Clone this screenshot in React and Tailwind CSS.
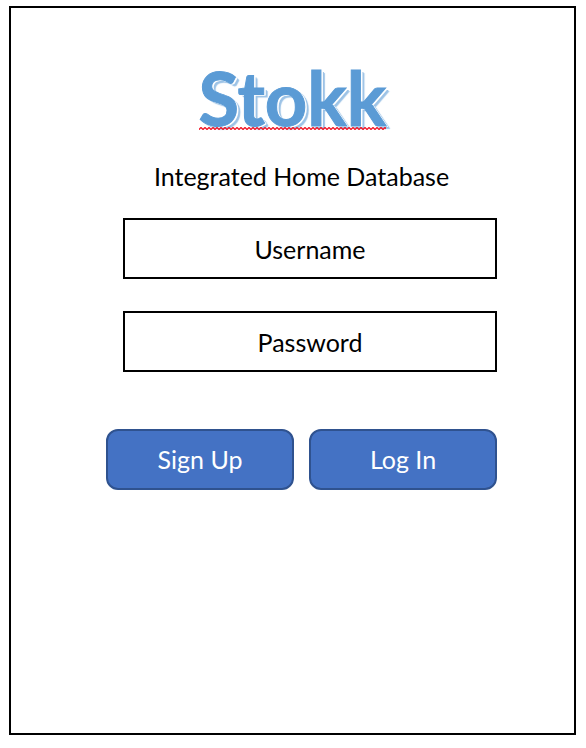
const fieldClass =
  "h-[61px] w-full border-2 border-black bg-white px-4 text-center text-[25px] text-black placeholder:text-black placeholder:opacity-100 focus:outline-none";

const buttonClass =
  "h-[61px] flex-1 rounded-xl border-2 border-[#2f528f] bg-[#4472c4] text-center text-[25px] text-white";

function Field({ id, label, type }) {
  return (
    <input id={id} name={id} type={type} aria-label={label} placeholder={label} className={fieldClass} />
  );
}

function Squiggle() {
  return (
    <svg
      className="absolute inset-x-0 bottom-0 h-[3px] w-full"
      aria-hidden="true"
    >
      <defs>
        <pattern id="squiggle" width="4" height="3" patternUnits="userSpaceOnUse">
          <path d="M-1 3.5 L0 2.5 L2 0.5 L4 2.5 L5 3.5" fill="none" stroke="#f01828" strokeWidth="1.3" />
        </pattern>
      </defs>
      <rect width="100%" height="3" fill="url(#squiggle)" />
    </svg>
  );
}

export default function App() {
  return (
    <div className="flex min-h-screen bg-white pt-1.5 pr-2.5 pb-[13px] pl-[9px] font-['Lato',sans-serif] text-black">
      <main className="flex-1 border-2 border-black">
        <header className="flex justify-center pt-[58px]">
          <h1 className="relative h-16 text-[74px] leading-16 font-bold text-[#5b9bd5] [-webkit-text-stroke:1px_#5b9bd5] [text-shadow:1px_1px_0_#fff,2px_1px_0_#fff,3px_2px_0_#9dc3e6,4px_3px_1px_#9dc3e6]">
            Stokk
            <Squiggle />
          </h1>
        </header>
        <form className="pr-[77px] pl-[95px]" onSubmit={(e) => e.preventDefault()}>
          <p className="pt-7 text-center text-[25px] leading-9">Integrated Home Database</p>
          <div className="flex flex-col gap-8 pt-[24px] pl-[17px]">
            <Field id="username" label="Username" type="text" />
            <Field id="password" label="Password" type="password" />
          </div>
          <div className="flex gap-[15px] pt-[57px]">
            <button type="button" className={buttonClass}>Sign Up</button>
            <button type="submit" className={buttonClass}>Log In</button>
          </div>
        </form>
      </main>
    </div>
  );
}
